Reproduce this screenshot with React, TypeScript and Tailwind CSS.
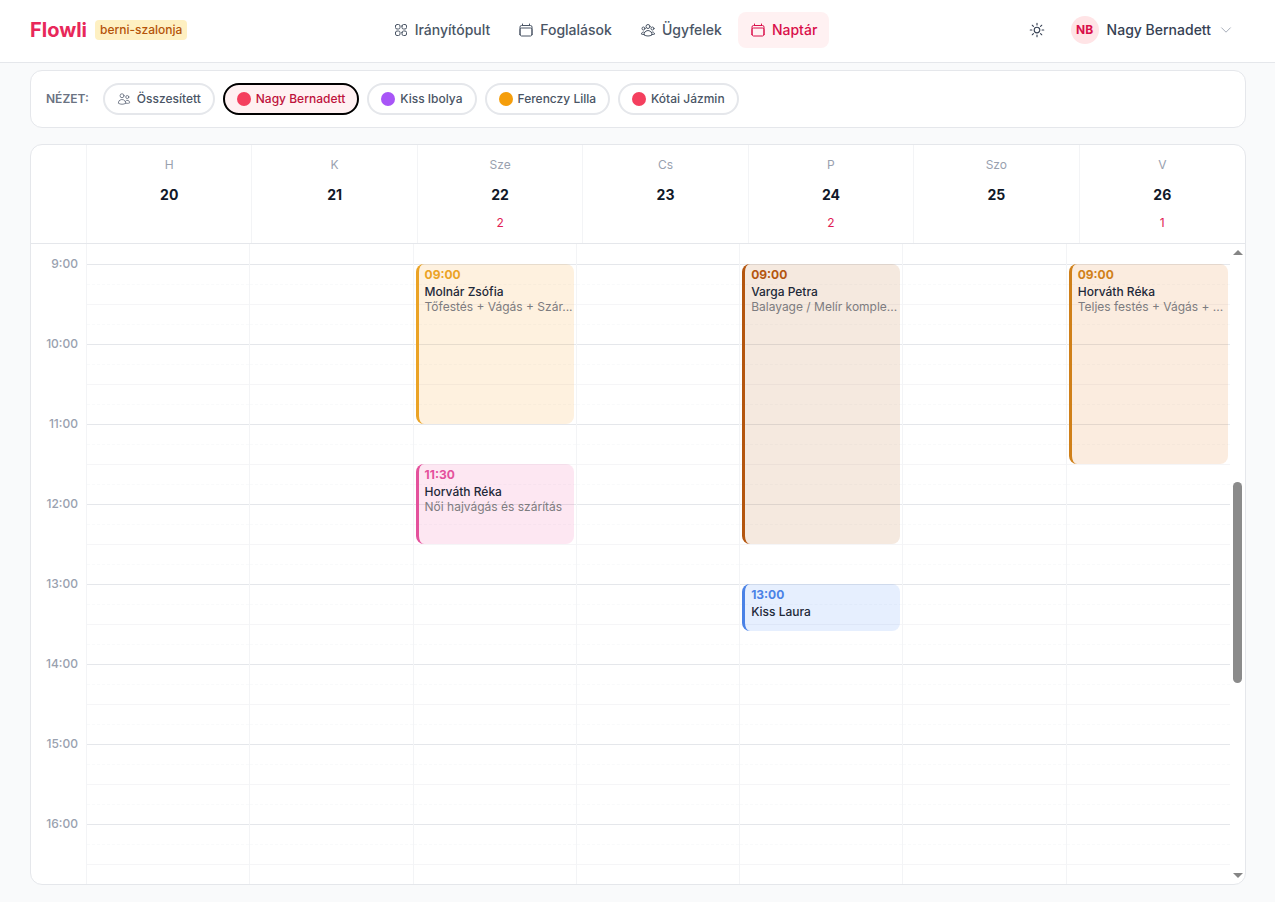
import React from 'react';
import { HiOutlineCalendar, HiOutlineChevronDown, HiOutlineSquares2X2, HiOutlineSun, HiOutlineUserGroup, HiOutlineUsers } from 'react-icons/hi2';

const navItems = [
    { label: 'Irányítópult', icon: HiOutlineSquares2X2, active: false },
    { label: 'Foglalások', icon: HiOutlineCalendar, active: false },
    { label: 'Ügyfelek', icon: HiOutlineUserGroup, active: false },
    { label: 'Naptár', icon: HiOutlineCalendar, active: true },
];

const staff = [
    { name: 'Nagy Bernadett', dot: 'bg-[#f43f5e]', active: true },
    { name: 'Kiss Ibolya', dot: 'bg-[#a855f7]', active: false },
    { name: 'Ferenczy Lilla', dot: 'bg-[#f59e0b]', active: false },
    { name: 'Kótai Jázmin', dot: 'bg-[#f43f5e]', active: false },
];

interface Booking {
    start: number;
    minutes: number;
    time: string;
    client: string;
    service?: string;
    box: string;
    timeColor: string;
}

interface Day {
    name: string;
    date: number;
    bookings: Booking[];
}

const days: Day[] = [
    { name: 'H', date: 20, bookings: [] },
    { name: 'K', date: 21, bookings: [] },
    {
        name: 'Sze',
        date: 22,
        bookings: [
            { start: 9, minutes: 120, time: '09:00', client: 'Molnár Zsófia', service: 'Tőfestés + Vágás + Szár...', box: 'border-[#eba325] bg-[#fb9b1e]/14', timeColor: 'text-[#eba325]' },
            { start: 11.5, minutes: 60, time: '11:30', client: 'Horváth Réka', service: 'Női hajvágás és szárítás', box: 'border-[#e4519c] bg-[#ec4899]/13', timeColor: 'text-[#e4519c]' },
        ],
    },
    { name: 'Cs', date: 23, bookings: [] },
    {
        name: 'P',
        date: 24,
        bookings: [
            { start: 9, minutes: 210, time: '09:00', client: 'Varga Petra', service: 'Balayage / Melír komple...', box: 'border-[#b4560f] bg-[#b45309]/13', timeColor: 'text-[#b4560f]' },
            { start: 13, minutes: 35, time: '13:00', client: 'Kiss Laura', box: 'border-[#4a82e6] bg-[#3b82f6]/13', timeColor: 'text-[#4a82e6]' },
        ],
    },
    { name: 'Szo', date: 25, bookings: [] },
    {
        name: 'V',
        date: 26,
        bookings: [
            { start: 9, minutes: 150, time: '09:00', client: 'Horváth Réka', service: 'Teljes festés + Vágás + ...', box: 'border-[#d08019] bg-[#e07a1f]/14', timeColor: 'text-[#d08019]' },
        ],
    },
];

const hours = [9, 10, 11, 12, 13, 14, 15, 16];
const HOUR_HEIGHT = 80;
const TOP_OFFSET = 20;

const Header: React.FC = () => (
    <header className="flex items-center justify-between h-[63px] pl-[30px] pr-[42px] pb-[3px] bg-white border-b border-gray-200">
        <div className="flex items-center gap-2">
            <a href="#" className="text-xl font-bold text-[#e8285a]">Flowli</a>
            <span className="h-5 px-[5px] leading-5 text-xs font-medium rounded bg-[#fef0c2] text-[#b45309]">berni-szalonja</span>
        </div>

        <nav className="flex gap-1">
            {navItems.map(({ label, icon: Icon, active }) => (
                <a
                    key={label}
                    href="#"
                    className={`flex items-center gap-1.5 h-9 px-3 rounded-lg text-sm font-medium ${active ? 'bg-[#fff1f2] text-[#d90f4a]' : 'text-gray-600'}`}
                >
                    <Icon className="size-4" />
                    {label}
                </a>
            ))}
        </nav>

        <div className="flex items-center gap-3">
            <button type="button" aria-label="Téma váltása" className="p-[5px] text-gray-700">
                <HiOutlineSun className="size-[18px]" />
            </button>
            <button type="button" className="flex items-center gap-2 pl-2 text-sm font-medium text-gray-700">
                <span className="grid place-items-center size-7 rounded-full bg-[#ffe4e6] text-xs font-bold text-[#d90f4a]">NB</span>
                Nagy Bernadett
                <HiOutlineChevronDown className="size-3.5 text-gray-400" />
            </button>
        </div>
    </header>
);

const StaffFilter: React.FC = () => (
    <section className="flex items-center gap-2 h-[58px] px-[15px] bg-white border border-gray-200 rounded-xl text-xs font-medium">
        <span className="mr-1.5 font-semibold text-gray-500">NÉZET:</span>
        <button type="button" className="flex items-center gap-1.5 h-8 px-3 rounded-full border-2 border-gray-200 text-gray-600">
            <HiOutlineUsers className="size-3.5 text-gray-500" />
            Összesített
        </button>
        {staff.map((person) => (
            <button
                key={person.name}
                type="button"
                className={`flex items-center gap-[5px] h-8 px-3 rounded-full border-2 ${person.active ? 'border-black bg-[#fff1f2] text-[#be123c]' : 'border-gray-200 text-gray-600'}`}
            >
                <span className={`size-3.5 rounded-full ${person.dot}`} />
                {person.name}
            </button>
        ))}
    </section>
);

const BookingCard: React.FC<{ booking: Booking }> = ({ booking }) => (
    <button
        type="button"
        className={`absolute inset-x-0.5 flex flex-col pt-0.5 pl-1.5 text-left text-xs rounded-lg border-l-3 ${booking.box}`}
        style={{
            top: TOP_OFFSET + (booking.start - 9) * HOUR_HEIGHT,
            height: (booking.minutes / 60) * HOUR_HEIGHT,
        }}
    >
        <span className={`leading-[17px] font-bold ${booking.timeColor}`}>{booking.time}</span>
        <span className="leading-[17px] font-medium text-gray-800">{booking.client}</span>
        {booking.service && <span className="leading-[14px] whitespace-nowrap text-[#7d7c80]">{booking.service}</span>}
    </button>
);

const WeekCalendar: React.FC = () => (
    <section className="bg-white border border-gray-200 rounded-xl overflow-hidden">
        {/* Day headers */}
        <div className="flex h-[99px] border-b border-gray-200">
            <div className="w-14 shrink-0 border-r border-gray-100" />
            <div className="grid grid-cols-7 flex-1">
                {days.map((day) => (
                    <div key={day.date} className="flex flex-col items-center pt-3 border-r border-gray-100 last:border-r-0">
                        <span className="text-xs leading-4 text-gray-400">{day.name}</span>
                        <span className="mt-3 text-sm leading-5 font-bold text-gray-900">{day.date}</span>
                        {day.bookings.length > 0 && <span className="mt-2.5 text-xs leading-4 text-[#e11d55]">{day.bookings.length}</span>}
                    </div>
                ))}
            </div>
        </div>

        {/* Time grid */}
        <div className="flex h-[640px] overflow-hidden">
            <div className="w-14 shrink-0 pt-3 pr-2 border-r border-gray-100 text-right text-xs leading-4 font-medium text-gray-400">
                {hours.map((hour) => (
                    <div key={hour} className="h-20">{hour}:00</div>
                ))}
            </div>
            <div className="grid grid-cols-7 flex-1">
                {days.map((day) => (
                    <div key={day.date} className="relative min-w-0 pt-5 border-r border-gray-100 last:border-r-0">
                        {hours.map((hour) => (
                            <div key={hour} className="h-20 border-t border-gray-200">
                                <div className="h-5 border-b border-dashed border-gray-50" />
                                <div className="h-5 border-b border-[#f5f5f7]" />
                                <div className="h-5 border-b border-dashed border-gray-50" />
                            </div>
                        ))}
                        {day.bookings.map((booking) => (
                            <BookingCard key={booking.time} booking={booking} />
                        ))}
                    </div>
                ))}
            </div>
            {/* Scrollbar */}
            <aside className="flex flex-col items-center w-[15px] shrink-0 py-1.5" aria-hidden="true">
                <svg viewBox="0 0 10 5" className="w-2.5 h-[5px]" fill="#858585"><path d="M5 0l5 5H0z" /></svg>
                <span className="grow-[227]" />
                <span className="w-[9px] grow-[201] rounded-full bg-[#8b8b8b]" />
                <span className="grow-[190]" />
                <svg viewBox="0 0 10 5" className="w-2.5 h-[5px]" fill="#858585"><path d="M0 0h10L5 5z" /></svg>
            </aside>
        </div>
    </section>
);

const App: React.FC = () => (
    <div className="min-h-screen bg-[#f9fafb] font-['Inter','Liberation_Sans',sans-serif]">
        <Header />
        <main className="flex flex-col gap-4 pt-[7px] pl-[30px] pr-[29px] pb-4">
            <StaffFilter />
            <WeekCalendar />
        </main>
    </div>
);

export default App;
